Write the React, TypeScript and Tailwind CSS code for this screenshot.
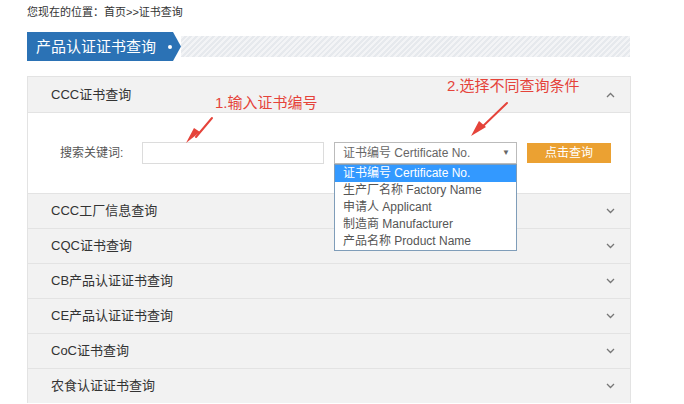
import React from "react";

const Chevron = ({ up = false }: { up?: boolean }) => (
  <svg width="9" height="6" viewBox="0 0 9 6" className="text-[#777]">
    {up ? (
      <path d="M1 5 L4.5 1.5 L8 5" fill="none" stroke="currentColor" strokeWidth="1.3" />
    ) : (
      <path d="M1 1 L4.5 4.5 L8 1" fill="none" stroke="currentColor" strokeWidth="1.3" />
    )}
  </svg>
);

const rows = ["CCC工厂信息查询", "CQC证书查询", "CB产品认证证书查询", "CE产品认证证书查询", "CoC证书查询", "农食认证证书查询"];
const options = ["证书编号 Certificate No.", "生产厂名称 Factory Name", "申请人 Applicant", "制造商 Manufacturer", "产品名称 Product Name"];

export default function App() {
  return (
    <div
      className="relative w-[684px] h-[404px] overflow-hidden bg-white text-[#333]"
      style={{ fontFamily: '"Liberation Sans", Arial, "Noto Sans CJK SC", sans-serif' }}
    >
      <div className="pl-[27px] pt-[4px] text-[11px] leading-[16px] text-[#333]">您现在的位置：首页&gt;&gt;证书查询</div>

      <div className="ml-[27px] mt-[12px] flex h-[29px] w-[603px] items-center">
        <div className="flex h-[29px] w-[154px] shrink-0 items-center bg-[#2b72b5] pl-[9px] [clip-path:polygon(0_0,146px_0,154px_50%,146px_100%,0_100%)]">
          <span className="text-[15px] leading-[29px] text-white">产品认证证书查询</span>
          <span className="ml-[12px] h-[4px] w-[4px] rounded-full bg-white" />
        </div>
        <div className="h-[21px] flex-1 bg-[repeating-linear-gradient(-45deg,#e6e9ed_0,#e6e9ed_2px,#f3f4f6_2px,#f3f4f6_4px)]" />
      </div>

      <div className="ml-[27px] mt-[15px] w-[604px] border border-[#e3e3e3] border-b-0">
        <div className="flex h-[36px] items-center justify-between bg-[#f2f2f2] pl-[23px] pr-[15px] border-b border-[#e3e3e3]">
          <span className="text-[13px]">CCC证书查询</span>
          <Chevron up />
        </div>
        <div className="relative h-[80px] bg-white pt-[29px]">
          <div className="flex items-center">
            <span className="ml-[32px] w-[82px] text-[12px] text-[#555]">搜索关键词:</span>
            <div className="h-[22px] w-[182px] border border-[#dcdcdc] bg-white" />
            <div className="relative ml-[10px] w-[183px]">
              <div className="flex h-[22px] items-center justify-between border border-[#bbb] bg-white pl-[8px] pr-[6px]">
                <span className="text-[12px] text-[#666]">证书编号 Certificate No.</span>
                <span className="text-[8px] text-[#666]">▼</span>
              </div>
              <div className="absolute left-0 top-[22px] z-10 w-[183px] border border-[#7f9db9] bg-white">
                {options.map((o, i) => (
                  <div
                    key={o}
                    className={
                      i === 0
                        ? "h-[17px] bg-[#3399ff] pl-[8px] text-[12px] leading-[17px] text-white"
                        : "h-[17px] pl-[8px] text-[12px] leading-[17px] text-[#555]"
                    }
                  >
                    {o}
                  </div>
                ))}
              </div>
            </div>
            <div className="ml-[10px] flex h-[20px] w-[84px] items-center justify-center bg-[#eba132] text-[12px] text-white">
              点击查询
            </div>
          </div>
        </div>
        {rows.map((r) => (
          <div
            key={r}
            className="flex h-[35px] items-center justify-between border-t border-[#e3e3e3] bg-[#f2f2f2] pl-[23px] pr-[15px]"
          >
            <span className="text-[13px]">{r}</span>
            <Chevron />
          </div>
        ))}
      </div>

      {/* annotations */}
      <div className="absolute left-[215px] top-[93px] text-[15px] leading-[20px] text-[#e5433a]">1.输入证书编号</div>
      <div className="absolute left-[447px] top-[76px] text-[15px] leading-[20px] text-[#e5433a]">2.选择不同查询条件</div>
      <svg className="absolute left-0 top-0" width="684" height="404" viewBox="0 0 684 404">
        <path d="M212 118 L196 137" stroke="#e5433a" strokeWidth="2" strokeLinecap="round" />
        <path d="M186 143 L200 132 L194 128 Z" fill="#e5433a" />
        <path d="M507 103 L480 129" stroke="#e5433a" strokeWidth="2" strokeLinecap="round" />
        <path d="M471 136 L486 127 L479 121 Z" fill="#e5433a" />
      </svg>
    </div>
  );
}
